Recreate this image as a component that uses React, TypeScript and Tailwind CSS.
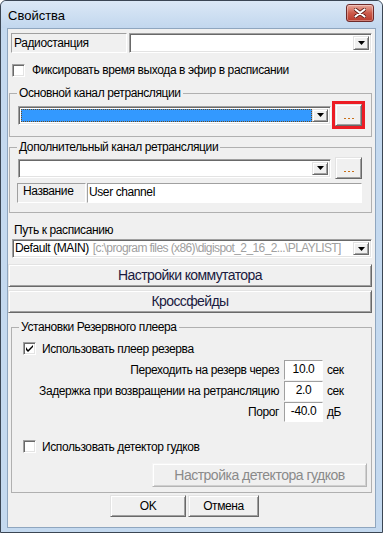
import React from "react";

const raised =
  "border border-t-[#e3e3e3] border-l-[#e3e3e3] border-b-[#696969] border-r-[#696969] shadow-[inset_1px_1px_0_#ffffff,inset_-1px_-1px_0_#a0a0a0] bg-[#f0f0f0]";
const sunken2 =
  "border border-t-[#a0a0a0] border-l-[#a0a0a0] border-b-[#ffffff] border-r-[#ffffff] shadow-[inset_1px_1px_0_#696969,inset_-1px_-1px_0_#e3e3e3]";
const sunken1 =
  "border border-t-[#a0a0a0] border-l-[#a0a0a0] border-b-[#ffffff] border-r-[#ffffff]";

function Arrow() {
  return (
    <div className={`${raised} w-[16px] h-full flex items-center justify-center shrink-0`}>
      <svg width="7" height="4" viewBox="0 0 7 4">
        <path d="M0 0H7L3.5 4Z" fill="#000" />
      </svg>
    </div>
  );
}

function Combo({
  className,
  children,
}: {
  className: string;
  children?: React.ReactNode;
}) {
  return (
    <div className={`${sunken2} bg-white flex p-[2px] ${className}`}>
      <div className="flex-1 min-w-0 flex items-center overflow-hidden whitespace-nowrap">{children}</div>
      <Arrow />
    </div>
  );
}

function Dots({ highlight }: { highlight?: boolean }) {
  return (
    <div
      className={`${raised} w-[27px] h-[22px] ml-[4px] flex items-end justify-center pb-[6px] gap-[2px] shrink-0 ${
        highlight ? "outline-[3px] outline-solid outline-[#ec1c24]" : ""
      }`}
    >
      <span className="w-[2px] h-[1px] bg-[#c8701a]" />
      <span className="w-[2px] h-[1px] bg-[#c8701a]" />
      <span className="w-[2px] h-[1px] bg-[#c8701a]" />
    </div>
  );
}

function Check({ checked }: { checked?: boolean }) {
  return (
    <div className={`${sunken2} bg-white w-[13px] h-[13px] flex items-center justify-center shrink-0`}>
      {checked && (
        <svg width="7" height="7" viewBox="0 0 7 7">
          <path d="M0 2L0 5L2 7L7 2L7 0L2 5Z" fill="#000" />
        </svg>
      )}
    </div>
  );
}

function Group({
  title,
  className,
  children,
}: {
  title: string;
  className: string;
  children: React.ReactNode;
}) {
  return (
    <fieldset className={`border border-[#b0b0b0] ${className}`}>
      <legend className="ml-[7px] px-[2px] leading-[14px] h-[14px]">{title}</legend>
      {children}
    </fieldset>
  );
}

export default function App() {
  return (
    <div className="w-[383px] h-[533px] bg-[#c4d9ef] border border-[#3b4654] rounded-t-[6px] flex flex-col font-['Liberation_Sans',Arial,sans-serif] text-[12px] tracking-[-0.4px] text-black overflow-hidden">
      {/* Title bar */}
      <div className="h-[27px] shrink-0 flex items-start justify-between bg-gradient-to-b from-[#dbe8f6] to-[#c2d7ee] rounded-t-[5px]">
        <div className="pl-[7px] pt-[7px] text-[13px] leading-[15px] tracking-[0px] text-black">
          Свойства
        </div>
        <div className="mt-[3px] mr-[8px] w-[28px] h-[18px] rounded-[3px] border border-[#6e2a2a] bg-gradient-to-b from-[#e8a89c] via-[#cc5b4b] to-[#b83a2c] shadow-[inset_0_0_0_1px_rgba(255,255,255,0.35)] flex items-center justify-center">
          <svg width="12" height="10" viewBox="0 0 12 10">
            <path
              d="M1.5 1.5L10.5 8.5M10.5 1.5L1.5 8.5"
              stroke="#5a1a14"
              strokeWidth="3.6"
              strokeLinecap="round"
            />
            <path
              d="M1.5 1.5L10.5 8.5M10.5 1.5L1.5 8.5"
              stroke="#ffffff"
              strokeWidth="2.2"
              strokeLinecap="round"
            />
          </svg>
        </div>
      </div>

      {/* Client */}
      <div className="ml-[6px] w-[369px] h-[500px] border border-[#8fa6bf] bg-[#f0f0f0] flex flex-col">
        {/* Radiostation */}
        <div className="flex mt-[4px] ml-[3px] h-[20px]">
          <div className={`${sunken1} w-[116px] h-full flex items-center pl-[2px]`}>Радиостанция</div>
          <Combo className="ml-[2px] w-[243px] h-full" />
        </div>

        {/* Fix time */}
        <div className="flex items-center mt-[11px] ml-[4px] h-[13px]">
          <Check />
          <span className="ml-[7px] leading-[13px]">Фиксировать время выхода в эфир в расписании</span>
        </div>

        {/* Group 1 */}
        <Group title="Основной канал ретрансляции" className="mt-[9px] ml-[1px] w-[363px] pb-[10px]">
          <div className="flex items-center mt-[4px] ml-[8px] h-[22px]">
            <Combo className="w-[313px] h-[19px]">
              <div className="w-full h-full bg-[#3399ff] border border-dotted border-[#6b4a1e]" />
            </Combo>
            <Dots highlight />
          </div>
        </Group>

        {/* Group 2 */}
        <Group title="Дополнительный канал ретрансляции" className="mt-[3px] ml-[1px] w-[363px] pb-[9px]">
          <div className="flex items-center mt-[3px] ml-[8px] h-[22px]">
            <Combo className="w-[313px] h-[19px]" />
            <Dots />
          </div>
          <div className="flex mt-[4px] ml-[7px] h-[20px]">
            <div className={`${sunken1} w-[69px] h-full flex items-end pb-[2px] pl-[5px]`}>Название</div>
            <div className={`${sunken1} bg-white ml-[1px] w-[275px] h-full pl-[1px] pt-[1px] leading-[14px]`}>
              User channel
            </div>
          </div>
        </Group>

        {/* Schedule path */}
        <div className="mt-[10px] ml-[6px] leading-[14px] h-[14px]">Путь к расписанию</div>
        <Combo className="mt-[2px] ml-[4px] w-[360px] h-[19px]">
          <span className="leading-[15px] shrink-0">Default (MAIN)</span>
          <span className="ml-[4px] leading-[15px] tracking-[-0.6px] text-[#a0a0a0] shrink-0">
            [c:\program files (x86)\digispot_2_16_2...\PLAYLIST]
          </span>
        </Combo>

        <button className={`${raised} mt-[6px] ml-[0px] w-[364px] h-[23px] text-[14px] tracking-[-0.6px] text-[#1a1a40] flex items-center justify-center`}>
          Настройки коммутатора
        </button>
        <button className={`${raised} mt-[3px] ml-[0px] w-[364px] h-[23px] text-[14px] tracking-[-0.6px] text-[#1a1a40] flex items-center justify-center`}>
          Кроссфейды
        </button>

        {/* Group 3 */}
        <Group title="Установки Резервного плеера" className="mt-[7px] ml-[3px] w-[361px] pb-[5px]">
          <div className="flex items-center mt-[8px] ml-[11px] h-[13px]">
            <Check checked />
            <span className="ml-[6px]">Использовать плеер резерва</span>
          </div>

          <div className="flex flex-col gap-[1px] mt-[5px]">
            {[
              { l: "Переходить на резерв через", v: "10.0", u: "сек" },
              { l: "Задержка при возвращении на ретрансляцию", v: "2.0", u: "сек" },
              { l: "Порог", v: "-40.0", u: "дБ" },
            ].map((r) => (
              <div key={r.l} className="flex items-center h-[20px]">
                <div className="w-[267px] text-right">{r.l}</div>
                <div className={`${sunken1} bg-white ml-[5px] w-[39px] h-full flex items-start justify-center pt-[1px] leading-[14px]`}>
                  {r.v}
                </div>
                <div className="ml-[4px]">{r.u}</div>
              </div>
            ))}
          </div>

          <div className="flex items-center mt-[18px] ml-[11px] h-[13px]">
            <Check />
            <span className="ml-[6px]">Использовать детектор гудков</span>
          </div>

          <button
            disabled
            className="mt-[10px] ml-[140px] w-[215px] h-[24px] border border-t-[#f4f4f4] border-l-[#f4f4f4] border-b-[#b5b5b5] border-r-[#b5b5b5] shadow-[inset_1px_1px_0_#ffffff,inset_-1px_-1px_0_#d0d0d0] bg-[#f0f0f0] text-[14px] tracking-[-0.5px] text-[#8a8a8a] flex items-center justify-center"
          >
            Настройка детектора гудков
          </button>
        </Group>

        {/* OK / Cancel */}
        <div className="flex mt-[2px] ml-[102px] h-[22px] gap-[2px]">
          <button className={`${raised} w-[76px] h-full border-[#000] border-t-[#000] border-l-[#000] flex items-center justify-center`}>
            OK
          </button>
          <button className={`${raised} w-[71px] h-full flex items-center justify-center`}>
            Отмена
          </button>
        </div>
      </div>
    </div>
  );
}
